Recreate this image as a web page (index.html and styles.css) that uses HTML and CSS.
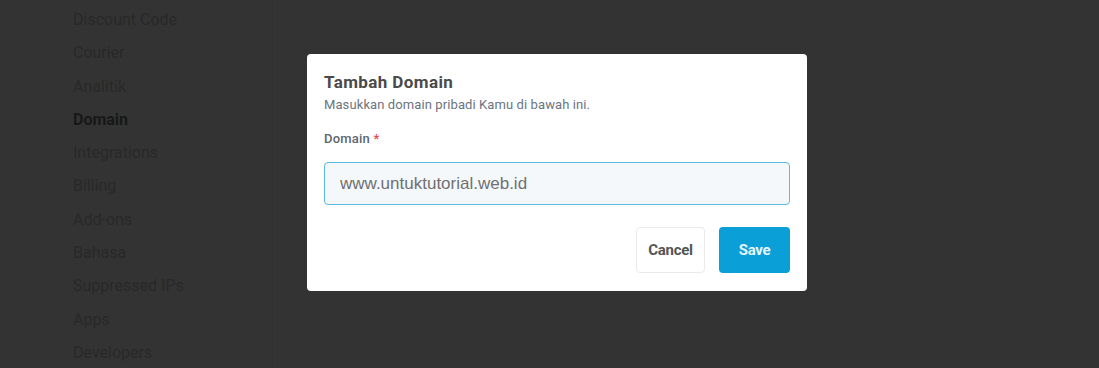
FILE: index.html
```html
<!DOCTYPE html>
<html lang="en">
<head>
    <meta charset="UTF-8">
    <meta name="viewport" content="width=device-width, initial-scale=1.0">
    <title>Tambah Domain</title>
    <link rel="stylesheet" href="styles.css">
</head>
<body>

    <div class="page">
        <ul class="sidebar">
            <li>Discount Code</li>
            <li>Courier</li>
            <li>Analitik</li>
            <li class="active">Domain</li>
            <li>Integrations</li>
            <li>Billing</li>
            <li>Add-ons</li>
            <li>Bahasa</li>
            <li>Suppressed IPs</li>
            <li>Apps</li>
            <li>Developers</li>
        </ul>
        <div class="content"></div>
    </div>

    <div class="overlay">
        <div class="modal">
            <h2 class="modal-title">Tambah Domain</h2>
            <p class="modal-desc">Masukkan domain pribadi Kamu di bawah ini.</p>

            <label class="field-label" for="domain">Domain <span class="required">*</span></label>
            <input type="text" id="domain" class="field-input" value="www.untuktutorial.web.id">

            <div class="actions">
                <button class="btn btn-cancel">Cancel</button>
                <button class="btn btn-save">Save</button>
            </div>
        </div>
    </div>

</body>
</html>
```

FILE: styles.css
```css
* {
    box-sizing: border-box;
}

body {
    margin: 0;
    padding: 0;
    font-family: Roboto, "Liberation Sans", Arial, sans-serif;
    background: white;
    height: 368px;
    overflow: hidden;
}

.page {
    display: flex;
    height: 100%;
}

.sidebar {
    list-style: none;
    margin: 0;
    padding: 3px 0 0 73px;
    width: 273px;
    border-right: 1px solid #eee;
}

.sidebar li {
    font-size: 16px;
    line-height: 33.3px;
    color: #c8c8c8;
}

.sidebar li.active {
    color: #777;
    font-weight: bold;
}

.content {
    flex: 1;
}

.overlay {
    position: fixed;
    inset: 0;
    background: rgba(0, 0, 0, 0.8);
    padding: 54px 0 0 307px;
}

.modal {
    background: white;
    width: 500px;
    padding: 18px 17px 18px 17px;
    border-radius: 4px;
}

.modal-title {
    margin: 0;
    font-size: 17px;
    line-height: 20px;
    font-weight: bold;
    letter-spacing: 0.4px;
    color: #4a4a4a;
}

.modal-desc {
    margin: 5px 0 0;
    font-size: 13px;
    line-height: 16px;
    letter-spacing: 0.1px;
    color: #6b7480;
}

.field-label {
    display: block;
    margin-top: 18px;
    font-size: 13px;
    line-height: 16px;
    letter-spacing: 0.2px;
    color: #5d6570;
    font-weight: 500;
}

.required {
    color: #e5484d;
}

.field-input {
    display: block;
    width: 100%;
    height: 43px;
    margin-top: 15px;
    padding: 0 15px;
    background: #f4f8fb;
    border: 1px solid #5bb8e2;
    border-radius: 4px;
    font-family: "Liberation Sans", Arial, sans-serif;
    font-size: 17px;
    color: #707070;
    outline: none;
}

.actions {
    display: flex;
    justify-content: flex-end;
    gap: 14px;
    margin-top: 22px;
}

.btn {
    height: 46px;
    padding: 0;
    border-radius: 4px;
    font-family: Roboto, "Liberation Sans", Arial, sans-serif;
    font-size: 15px;
    font-weight: bold;
    cursor: pointer;
    letter-spacing: -0.3px;
}

.btn-cancel {
    background: white;
    color: #555;
    border: 1px solid #eaeaea;
    width: 69px;
}

.btn-save {
    background: #0a9fd6;
    color: #e6f6fc;
    border: none;
    width: 71px;
}
```
